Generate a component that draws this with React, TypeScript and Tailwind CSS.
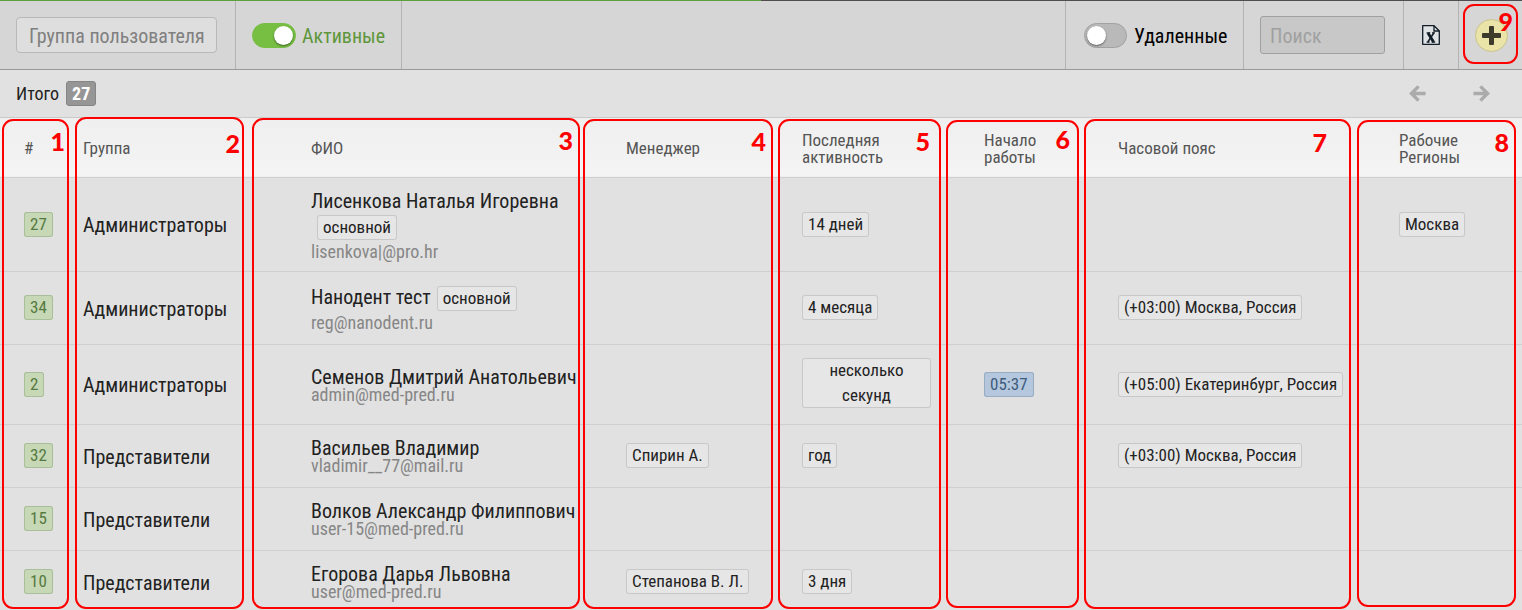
import React from "react";

type Tone = "plain" | "green" | "blue";

const tones: Record<Tone, string> = {
  plain: "inset-ring-[#c8c8c8] bg-[#e6e6e6] text-[#222]",
  green: "inset-ring-[#a9bf9a] bg-[#c6d8b6] text-[#56793f]",
  blue: "inset-ring-[#98acc4] bg-[#b4c7dc] text-[#3d5b7c]",
};

function Tag({ tone = "plain", className = "", children }: { tone?: Tone; className?: string; children: React.ReactNode }) {
  return (
    <span className={`inline-block rounded-[3px] px-1.5 text-center align-middle text-[17px] leading-[25px] inset-ring ${tones[tone]} ${className}`}>
      {children}
    </span>
  );
}

interface User {
  id: number;
  group: string;
  name: string;
  email: string;
  main?: boolean;
  manager?: string;
  activity?: string;
  start?: string;
  zone?: string;
  region?: string;
  height: string;
}

const users: User[] = [
  { id: 27, group: "Администраторы", name: "Лисенкова Наталья Игоревна", email: "lisenkova|@pro.hr", main: true, activity: "14 дней", region: "Москва", height: "h-[94px]" },
  { id: 34, group: "Администраторы", name: "Нанодент тест", email: "reg@nanodent.ru", main: true, activity: "4 месяца", zone: "(+03:00) Москва, Россия", height: "h-[73px]" },
  { id: 2, group: "Администраторы", name: "Семенов Дмитрий Анатольевич", email: "admin@med-pred.ru", activity: "несколько секунд", start: "05:37", zone: "(+05:00) Екатеринбург, Россия", height: "h-[80px]" },
  { id: 32, group: "Представители", name: "Васильев Владимир", email: "vladimir__77@mail.ru", manager: "Спирин А.", activity: "год", zone: "(+03:00) Москва, Россия", height: "h-[63px]" },
  { id: 15, group: "Представители", name: "Волков Александр Филиппович", email: "user-15@med-pred.ru", height: "h-[63px]" },
  { id: 10, group: "Представители", name: "Егорова Дарья Львовна", email: "user@med-pred.ru", manager: "Степанова В. Л.", activity: "3 дня", height: "h-[63px]" },
];

const marks = [
  { n: 1, box: "left-[2px] w-[67px] top-[1px] bottom-[1px]", label: "right-[2px] top-[4px]" },
  { n: 2, box: "left-[75px] w-[169px] -top-px bottom-[1px]", label: "right-[2px] top-[8px]" },
  { n: 3, box: "left-[252px] w-[328px] top-0 bottom-[1px]", label: "right-[5px] top-[4px]" },
  { n: 4, box: "left-[583px] w-[190px] top-[1px] bottom-[1px]", label: "right-[5px] top-[4px]" },
  { n: 5, box: "left-[778px] w-[163px] top-[1px] bottom-[1px]", label: "right-[9px] top-[4px]" },
  { n: 6, box: "left-[946px] w-[133px] top-[2px] bottom-[2px]", label: "right-[7px] top-[1px]" },
  { n: 7, box: "left-[1084px] w-[267px] top-[1px] bottom-[1px]", label: "right-[22px] top-[5px]" },
  { n: 8, box: "left-[1357px] right-[6px] top-[2px] bottom-[3px]", label: "right-[5px] top-[4px]" },
];

function Mark({ n, box, label }: { n: number; box: string; label: string }) {
  return (
    <div className={`pointer-events-none absolute rounded-[11px] border-2 border-[#fe0000] ${box}`}>
      <span className={`absolute font-[Lato,sans-serif] text-[25px] leading-8 font-black text-[#fe0000] ${label}`}>{n}</span>
    </div>
  );
}

function Arrow({ d }: { d: string }) {
  return (
    <svg width="17" height="17" viewBox="0 0 16 16" fill="none" stroke="currentColor" strokeWidth="3.2">
      <path d={d} />
    </svg>
  );
}

const switchBase =
  "relative h-[25px] shrink-0 appearance-none rounded-full border before:absolute before:top-[2px] before:size-[19px] before:rounded-full before:bg-white before:shadow-[0_1px_2px_rgba(0,0,0,0.5)]";

const cell = "flex items-center border-r border-[#b3b3b3]";

export default function App() {
  return (
    <div className="flex h-screen flex-col overflow-hidden bg-[#e1e1e1] font-['Roboto_Condensed','Liberation_Sans_Narrow',Roboto,sans-serif] text-[18px] text-[#222]">
      <div className="flex h-px shrink-0">
        <div className="w-1/2 bg-[#5f9e3c]" />
        <div className="flex-1 bg-[#504c50]" />
      </div>
      <header className="flex h-[69px] shrink-0 border-b border-[#999] bg-[#d6d6d6]">
        <div className={`${cell} w-[236px] pl-4`}>
          <input
            aria-label="Группа пользователя"
            placeholder="Группа пользователя"
            className="h-9 w-[201px] rounded-[4px] border border-[#b9b9b9] bg-[#dedede] px-3 pt-px text-[20px] placeholder:text-[#808080]"
          />
        </div>
        <label className={`${cell} w-[166px] gap-[6px] pl-4 text-[20px] text-[#5f963b]`}>
          <input type="checkbox" defaultChecked className={`${switchBase} w-11 border-[#77bf43] bg-[#77bf43] before:right-[2px]`} />
          <span className="pt-0.5">Активные</span>
        </label>
        <div className="flex-1 border-r border-[#b3b3b3]" />
        <label className={`${cell} w-[178px] gap-[7px] pl-[18px] text-[20px] text-black`}>
          <input type="checkbox" className={`${switchBase} w-[43px] border-[#a2a2a2] bg-[#b9b9b9] before:left-[2px]`} />
          <span className="pt-0.5">Удаленные</span>
        </label>
        <div className={`${cell} w-[160px] pl-4`}>
          <input
            type="search"
            aria-label="Поиск"
            placeholder="Поиск"
            className="h-[38px] w-[125px] rounded-[3px] border border-[#a0a0a0] bg-[#c8c8c8] px-[9px] pt-px text-[20px] placeholder:text-[#a0a0a0]"
          />
        </div>
        <button aria-label="Экспорт в Excel" className={`${cell} w-[55px] justify-center pr-px`}>
          <svg width="18" height="20" viewBox="0 0 18 20" fill="none" stroke="#111c26">
            <path d="M.7.7H12L17.3 6V19.3H.7Z" fill="#dfe3e6" strokeWidth="1.3" strokeLinejoin="round" />
            <path d="M12 .7V6H17.3" strokeWidth="1.3" />
            <path d="M6 8L11.6 17" strokeWidth="2.8" />
            <path d="M11.8 8L5.8 17" strokeWidth="1.5" />
            <path d="M4.6 7.8H8.2M10 7.8H13M4.6 17.2H7.6M9.6 17.2H13.2" strokeWidth="1.2" />
          </svg>
        </button>
        <div className="relative flex w-[63px] items-center justify-center pl-0.5">
          <button aria-label="Добавить" className="flex size-[33px] items-center justify-center rounded-full border border-[#c9c38c] bg-[#ebe4a8] text-[#3d3c2c]">
            <svg width="19" height="19" viewBox="0 0 19 19" fill="currentColor">
              <rect x="7" y="0" width="5" height="19" rx="1" />
              <rect x="0" y="7" width="19" height="5" rx="1" />
            </svg>
          </button>
          <Mark n={9} box="left-[4px] w-[55px] top-[3px] h-[60px]" label="right-[3px] -top-px" />
        </div>
      </header>

      <div className="flex h-12 shrink-0 items-center border-b border-[#cacaca] pr-8 pl-4">
        <span>Итого</span>
        <span className="ml-[7px] rounded-[3px] border border-[#858585] bg-[#969696] px-[5px] leading-[23px] font-bold text-white">27</span>
        <div className="ml-auto flex gap-[47px] text-[#ababab]">
          <button aria-label="Назад"><Arrow d="M9 1.3L2.3 8L9 14.7M2.6 8H15.6" /></button>
          <button aria-label="Вперёд"><Arrow d="M7 1.3L13.7 8L7 14.7M13.4 8H.4" /></button>
        </div>
      </div>

      <main className="relative min-h-0 flex-1">
        <table className="w-full table-fixed border-collapse text-left">
          <colgroup>
            <col className="w-[75px]" />
            <col className="w-[228px]" />
            <col className="w-[315px]" />
            <col className="w-[176px]" />
            <col className="w-[182px]" />
            <col className="w-[134px]" />
            <col className="w-[281px]" />
            <col />
          </colgroup>
          <thead>
            <tr className="h-[59px] border-b border-[#cfcfcf] bg-linear-to-b from-[#efefef] to-[#f4f4f4] text-[17px] leading-[17px] text-[#555]">
              <th className="pt-[3px] pl-6 font-normal">#</th>
              <th className="pt-[3px] pl-2 font-normal">Группа</th>
              <th className="pt-[3px] pl-2 font-normal">ФИО</th>
              <th className="pt-[3px] pl-2 font-normal">Менеджер</th>
              <th className="pt-[3px] pl-2 font-normal">Последняя<br />активность</th>
              <th className="pt-[3px] pl-2 font-normal">Начало<br />работы</th>
              <th className="pt-[3px] pl-2 font-normal">Часовой пояс</th>
              <th className="pt-[3px] pl-2 font-normal">Рабочие<br />Регионы</th>
            </tr>
          </thead>
          <tbody>
            {users.map((u) => (
              <tr key={u.id} className={`border-b border-[#cfcfcf] ${u.height}`}>
                <td className="pb-0.5 pl-6"><Tag tone="green">{u.id}</Tag></td>
                <td className="pt-0.5 pl-2 text-[20px]">{u.group}</td>
                {u.main ? (
                  <td className="pt-[5px] pl-2">
                    <div className="text-[20px] leading-6">
                      {u.name}
                      <Tag className="-my-px ml-[6px]">основной</Tag>
                    </div>
                    <div className="leading-[25px] text-[#868686]">{u.email}</div>
                  </td>
                ) : (
                  <td className="pt-[3px] pl-2 leading-[18px]">
                    <div className="text-[20px]">{u.name}</div>
                    <div className="text-[#868686]">{u.email}</div>
                  </td>
                )}
                <td className="pb-0.5 pl-2">{u.manager && <Tag>{u.manager}</Tag>}</td>
                <td className="pr-[45px] pb-0.5 pl-2">{u.activity && <Tag>{u.activity}</Tag>}</td>
                <td className="pb-0.5 pl-2">{u.start && <Tag tone="blue">{u.start}</Tag>}</td>
                <td className="pb-0.5 pl-2 whitespace-nowrap">{u.zone && <Tag>{u.zone}</Tag>}</td>
                <td className="pb-0.5 pl-2">{u.region && <Tag>{u.region}</Tag>}</td>
              </tr>
            ))}
          </tbody>
        </table>
        {marks.map((m) => (
          <Mark key={m.n} {...m} />
        ))}
      </main>
    </div>
  );
}
